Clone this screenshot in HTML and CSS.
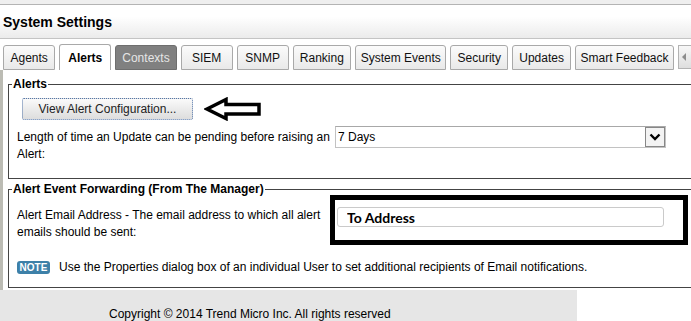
FILE: index.html
```html
<!DOCTYPE html>
<html>
<head>
    <title>System Settings</title>
    <link rel="stylesheet" href="styles.css">
</head>
<body>
    <div class="topbar"></div>
    <div class="header">
        <h1>System Settings</h1>
    </div>

    <div class="tabs">
        <div class="tab">Agents</div>
        <div class="tab active">Alerts</div>
        <div class="tab disabled">Contexts</div>
        <div class="tab">SIEM</div>
        <div class="tab">SNMP</div>
        <div class="tab">Ranking</div>
        <div class="tab">System Events</div>
        <div class="tab">Security</div>
        <div class="tab">Updates</div>
        <div class="tab">Smart Feedback</div>
        <div class="tab-scroll"><span class="tri"></span></div>
    </div>

    <div class="content">
        <fieldset class="group">
            <legend>Alerts</legend>
            <div class="button-row">
                <button class="btn">View Alert Configuration...</button>
                <svg class="arrow" width="60" height="24" viewBox="0 0 60 24">
                    <polygon points="3,12 22,2.5 22,7.5 55,7.5 55,17 22,17 22,21.5" fill="#fff" stroke="#000" stroke-width="3.5"/>
                </svg>
            </div>
            <div class="field-row">
                <div class="field-label">Length of time an Update can be pending before raising an Alert:</div>
                <div class="select">
                    <span class="select-text">7 Days</span>
                    <span class="select-btn">
                        <svg width="12" height="8" viewBox="0 0 12 8">
                            <path d="M1.5 1.5 L6 6 L10.5 1.5" fill="none" stroke="#000" stroke-width="2.4"/>
                        </svg>
                    </span>
                </div>
            </div>
        </fieldset>

        <fieldset class="group second">
            <legend>Alert Event Forwarding (From The Manager)</legend>
            <div class="field-row">
                <div class="field-label email-label">Alert Email Address - The email address to which all alert emails should be sent:</div>
                <div class="highlight">
                    <input type="text" class="address" value="To Address">
                </div>
            </div>
            <div class="note-row">
                <span class="note">NOTE</span>
                <span>Use the Properties dialog box of an individual User to set additional recipients of Email notifications.</span>
            </div>
        </fieldset>
    </div>

    <div class="footer">Copyright &copy; 2014 Trend Micro Inc. All rights reserved</div>
</body>
</html>
```

FILE: styles.css
```css
* {
    margin: 0;
    padding: 0;
    box-sizing: border-box;
}

html, body {
    overflow: hidden;
}

body {
    width: 691px;
    height: 321px;
    background: #fff;
    color: #000;
    font-family: "Liberation Sans", Arial, sans-serif;
    font-size: 12px;
}

.topbar {
    height: 5px;
    background: #efefef;
    border-bottom: 1px solid #b4b4b4;
}

.header {
    height: 34px;
    background: linear-gradient(#fff 35%, #ebebeb);
    border-bottom: 1px solid #c4c4c4;
    display: flex;
    align-items: center;
    padding-left: 3px;
}

.header h1 {
    font-size: 14px;
    font-weight: bold;
}

.tabs {
    display: flex;
    align-items: flex-end;
    gap: 4px;
    padding: 6px 0 0 3px;
    height: 31px;
}

.tab {
    height: 25px;
    min-width: 52px;
    padding: 0 8px;
    display: flex;
    align-items: center;
    justify-content: center;
    border: 1px solid #a9a9a9;
    border-radius: 3px 3px 0 0;
    background: linear-gradient(#fbfbfb, #e9e9e9);
    color: #111;
    white-space: nowrap;
}

.tab.active {
    height: 26px;
    border-bottom: none;
    background: #fff;
    font-weight: bold;
    color: #000;
}

.tab.disabled {
    background: #808080;
    border-color: #6e6e6e;
    color: #e6e6e6;
}

.tab-scroll {
    margin-left: auto;
    width: 14px;
    height: 24px;
    margin-bottom: 1px;
    border: 1px solid #b3b3b3;
    border-right: none;
    background: linear-gradient(#f7f7f7, #dedede);
    display: flex;
    align-items: center;
    padding-left: 3px;
}

.tri {
    width: 0;
    height: 0;
    border-top: 4px solid transparent;
    border-bottom: 4px solid transparent;
    border-right: 4px solid #8c8c8c;
}

.content {
    height: 220px;
    border-left: 3px solid #bcbcb4;
    padding-top: 7px;
}

.group {
    border: 1px solid #444;
    margin: 0 -20px 0 5px;
    padding: 6px 9px 15px 8px;
}

.group legend {
    font-weight: bold;
    line-height: 14px;
    padding: 0 1px;
    margin-left: -5px;
}

.group.second {
    margin-top: 3px;
    padding-top: 0;
    padding-bottom: 11px;
}

.button-row {
    display: flex;
    align-items: center;
}

.btn {
    width: 171px;
    height: 22px;
    margin-left: 5px;
    border: 1px dotted #5577aa;
    border-radius: 2px;
    background: linear-gradient(#fafafa, #dddddd);
    font-family: "Liberation Sans", Arial, sans-serif;
    font-size: 12px;
    color: #222;
}

.arrow {
    margin-left: 11px;
    display: block;
}

.field-row {
    display: flex;
    align-items: flex-start;
    margin-top: 5px;
}

.field-label {
    width: 318px;
    line-height: 17px;
    padding-top: 3px;
}

.select {
    width: 331px;
    height: 22px;
    border: 1px solid #c2c2c2;
    border-top-color: #a8a8a8;
    display: flex;
    align-items: center;
    justify-content: space-between;
    padding-left: 2px;
}

.select-btn {
    width: 20px;
    height: 20px;
    border: 1px solid #878787;
    background: #f3f3f3;
    display: flex;
    align-items: center;
    justify-content: center;
}

.select-btn svg {
    display: block;
}

.second .field-row {
    margin-top: -1px;
}

.email-label {
    width: 313px;
    padding-top: 12px;
}

.highlight {
    width: 358px;
    height: 50px;
    border: 5px solid #000;
    padding: 7px 19px 0 2px;
}

.address {
    width: 100%;
    height: 20px;
    border: 1px solid #cacaca;
    border-radius: 3px;
    padding-left: 9px;
    font-family: Lato, "Open Sans", sans-serif;
    font-size: 14px;
    font-weight: bold;
    color: #000;
    background: #fff;
}

.note-row {
    display: flex;
    align-items: center;
    margin-top: 14px;
    line-height: 17px;
}

.note {
    width: 33px;
    height: 13px;
    margin-right: 9px;
    background: #3d80a8;
    border-radius: 3px;
    color: #fff;
    font-size: 10px;
    font-weight: bold;
    line-height: 13px;
    text-align: center;
}

.footer {
    width: 577px;
    height: 31px;
    background: #e6e6e6;
    padding: 17px 0 0 109px;
    line-height: 14px;
}
```
